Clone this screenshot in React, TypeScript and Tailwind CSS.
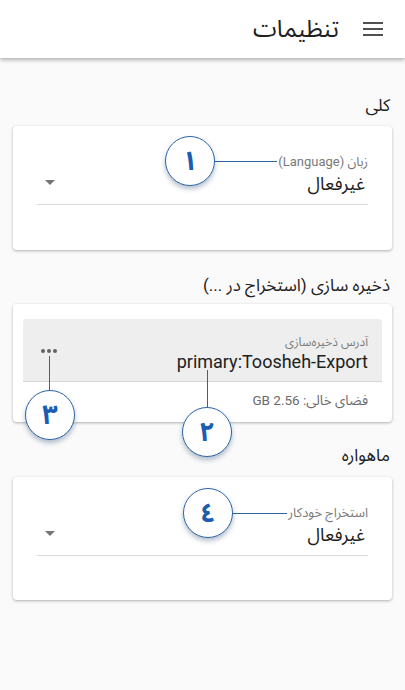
import React from 'react'

const font = "font-['Roboto','Noto_Sans_Arabic','DejaVu_Sans',sans-serif]"

const DropArrow = () => (
  <svg width="10" height="5" viewBox="0 0 10 5" className="shrink-0">
    <path d="M0 0 L10 0 L5 5 Z" fill="#757575" />
  </svg>
)

// numbered annotation bubble, drawn over the screen
const Callout = ({n, className}: {n: string; className: string}) => (
  <div
    className={`absolute w-[50px] h-[50px] rounded-full bg-white border border-[#2d64a6] shadow-[0_3px_5px_rgba(40,70,110,0.35)] flex items-center justify-center text-[#1b5db0] text-[27px] font-bold leading-none ${className}`}
  >
    {n}
  </div>
)

const SelectField = ({label, value}: {label: string; value: string}) => (
  <div className="border-b border-[#dadada] pb-[6px]">
    <div className="text-[13px] leading-[16px] text-[#7a7a7a]">{label}</div>
    <div className="flex items-center justify-between">
      <span className="text-[18px] leading-[28px] text-[#212121] pr-[3px]">{value}</span>
      <span className="pl-[8px] -mt-[4px]"><DropArrow /></span>
    </div>
  </div>
)

const SectionTitle = ({children, className}: {children: React.ReactNode; className: string}) => (
  <h2 className={`text-[17px] leading-[24px] text-[#212121] pr-[2px] ${className}`}>{children}</h2>
)

const Card = ({children, className}: {children: React.ReactNode; className: string}) => (
  <section className={`bg-white rounded-[4px] shadow-[0_1px_3px_rgba(0,0,0,0.3)] ${className}`}>{children}</section>
)

const App = () => {
  return (
    <div dir="rtl" className={`relative w-[405px] h-[690px] bg-[#fafafa] overflow-hidden ${font}`}>
      {/* app bar */}
      <header className="h-[58px] bg-white flex items-center gap-[24px] pr-[22px] shadow-[0_2px_4px_rgba(0,0,0,0.3)] relative z-10">
        <svg width="20" height="14" viewBox="0 0 20 14">
          <rect x="0" y="0" width="20" height="2" fill="#505050" />
          <rect x="0" y="6" width="20" height="2" fill="#505050" />
          <rect x="0" y="12" width="20" height="2" fill="#505050" />
        </svg>
        <h1 className="text-[24px] text-[#212121] leading-none">تنظیمات</h1>
      </header>

      <main className="px-[13px] flex flex-col">
        <SectionTitle className="mt-[35px] mb-[9px]">کلی</SectionTitle>
        <Card className="h-[124px] pt-[28px] px-[24px]">
          <SelectField label="زبان (Language)" value="غیرفعال" />
        </Card>

        <SectionTitle className="mt-[23px] mb-[7px]">ذخیره سازی (استخراج در ...)</SectionTitle>
        <Card className="h-[118px] pt-[15px] px-[10px]">
          <div className="bg-[#eeeeee] border-b border-[#d4d4d4] h-[63px] rounded-t-[3px] pt-[15px] pr-[14px] pl-[18px] flex items-center justify-between">
            <div className="self-start">
              <div className="text-[12px] leading-[16px] text-[#7a7a7a]">آدرس ذخیره‌سازی</div>
              <div className="text-[18px] leading-[24px] text-[#212121]">primary:Toosheh-Export</div>
            </div>
            <svg width="16" height="4" viewBox="0 0 16 4" className="-mt-[14px]">
              <circle cx="2" cy="2" r="2" fill="#616161" />
              <circle cx="8" cy="2" r="2" fill="#616161" />
              <circle cx="14" cy="2" r="2" fill="#616161" />
            </svg>
          </div>
          <div className="pt-[8px] pr-[14px] text-[13.5px] leading-[20px] text-[#6b6b6b]">فضای خالی: 2.56 GB</div>
        </Card>

        <SectionTitle className="mt-[21px] mb-[10px]">ماهواره</SectionTitle>
        <Card className="h-[123px] pt-[28px] px-[24px]">
          <SelectField label="استخراج خودکار" value="غیرفعال" />
        </Card>
      </main>

      {/* callout annotations */}
      <div className="absolute left-[215px] top-[161px] w-[62px] h-px bg-[#2d64a6]" />
      <Callout n="١" className="left-[165px] top-[136px]" />

      <div className="absolute left-[207px] top-[370px] w-px h-[38px] bg-[#2d64a6]" />
      <Callout n="٢" className="left-[182px] top-[407px]" />

      <div className="absolute left-[49px] top-[356px] w-px h-[35px] bg-[#2d64a6]" />
      <Callout n="٣" className="left-[25px] top-[390px]" />

      <div className="absolute left-[233px] top-[513px] w-[54px] h-px bg-[#2d64a6]" />
      <Callout n="٤" className="left-[183px] top-[488px]" />
    </div>
  )
}
export default App
